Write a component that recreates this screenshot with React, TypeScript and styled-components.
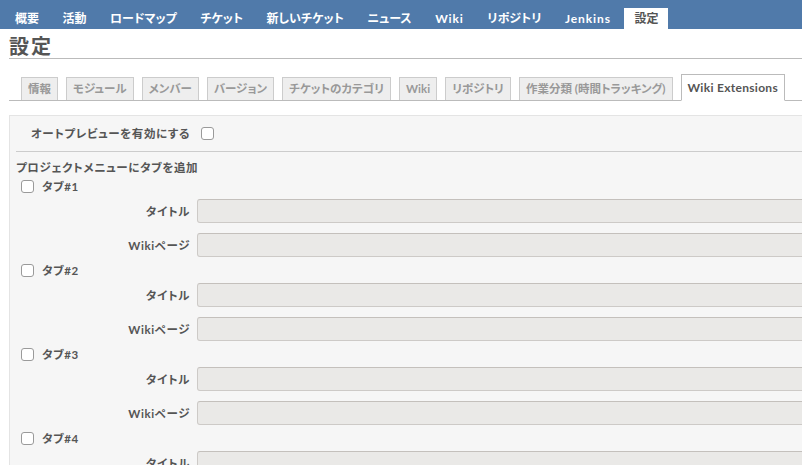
import styled, { createGlobalStyle } from 'styled-components';

const GlobalStyle = createGlobalStyle`
  html, body {
    margin: 0;
    padding: 0;
    overflow: hidden;
    background: #fff;
  }
  body {
    font-family: Lato, "Noto Sans CJK JP", sans-serif;
    font-feature-settings: "palt";
    color: #555;
  }
`;

const Page = styled.div`
  width: 1100px;
`;

const MainMenu = styled.ul`
  display: flex;
  align-items: flex-end;
  height: 29px;
  margin: 0;
  padding: 0 0 0 5px;
  list-style: none;
  background: #507aaa;
`;

const MenuItem = styled.li<{ selected?: boolean; latin?: boolean }>`
  height: 21px;
  line-height: 21px;
  padding: 0 10px;
  margin-right: 3.5px;
  font-size: 12px;
  font-weight: bold;
  letter-spacing: ${(p) => (p.latin ? '0.9px' : '0')};
  color: ${(p) => (p.selected ? '#555' : '#fff')};
  background: ${(p) => (p.selected ? '#fff' : 'transparent')};
`;

const Content = styled.div`
  padding: 0 0 0 9px;
`;

const Title = styled.h2`
  margin: 0;
  height: 29px;
  line-height: 34px;
  font-size: 20px;
  letter-spacing: 2px;
  font-weight: bold;
  color: #555;
  border-bottom: 1px solid #bbb;
`;

const Tabs = styled.ul`
  display: flex;
  align-items: flex-end;
  margin: 16px 0 0 0;
  padding: 0 0 0 12px;
  list-style: none;
  height: 25px;
  border-bottom: 1px solid #bbb;
`;

const Tab = styled.li<{ selected?: boolean }>`
  margin-right: 8px;
  padding: 0 6px;
  height: ${(p) => (p.selected ? '25px' : '22px')};
  line-height: ${(p) => (p.selected ? '25px' : '22px')};
  margin-bottom: ${(p) => (p.selected ? '-1px' : '0')};
  font-size: ${(p) => (p.selected ? '12px' : '11.5px')};
  font-weight: bold;
  letter-spacing: ${(p) => (p.selected ? '0.3px' : '0')};
  color: ${(p) => (p.selected ? '#555' : '#999')};
  background: ${(p) => (p.selected ? '#fff' : '#eee')};
  border: 1px solid ${(p) => (p.selected ? '#bbb' : '#ccc')};
  border-bottom: ${(p) => (p.selected ? '1px solid #fff' : 'none')};
  white-space: nowrap;
`;

const Box = styled.div`
  margin-top: 14px;
  padding: 9px 0 0 6px;
  background: #f6f6f6;
  border: 1px solid #e4e4e4;
  height: 400px;
`;

const Row = styled.div`
  display: flex;
  align-items: center;
`;

const Label = styled.label`
  width: 174px;
  text-align: right;
  font-size: 11.5px;
  font-weight: bold;
  letter-spacing: 0.6px;
  white-space: nowrap;
  color: #555;
`;

const Check = styled.span`
  display: inline-block;
  box-sizing: border-box;
  width: 13px;
  height: 13px;
  border: 1px solid #9a9a9a;
  border-radius: 3px;
  background: #fff;
`;

const PreviewRow = styled(Row)`
  height: 16px;
  ${Check} {
    margin-left: 11px;
  }
`;

const Divider = styled.div`
  margin-top: 10px;
  border-top: 1px solid #ccc;
`;

const Heading = styled.div`
  margin-top: 8px;
  height: 16px;
  line-height: 16px;
  font-size: 11.5px;
  font-weight: bold;
  letter-spacing: 0.6px;
`;

const Group = styled.div`
  display: flex;
  flex-direction: column;
  padding-top: 2px;
  & + & {
    padding-top: 5px;
  }
`;

const GroupHeader = styled(Row)`
  height: 16px;
  padding-left: 5px;
  gap: 8px;
  font-size: 11.5px;
  font-weight: bold;
  letter-spacing: 0.6px;
  margin-bottom: 5px;
`;

const FieldRow = styled(Row)`
  height: 24px;
  & + & {
    margin-top: 10px;
  }
`;

const Input = styled.div`
  margin-left: 7px;
  flex: 1;
  box-sizing: border-box;
  height: 24px;
  background: #eae9e7;
  border: 1px solid #cdcac7;
  border-top-color: #c4c0bc;
  border-radius: 3px;
`;

const menu = ['概要', '活動', 'ロードマップ', 'チケット', '新しいチケット', 'ニュース', 'Wiki', 'リポジトリ', 'Jenkins', '設定'];
const tabs = ['情報', 'モジュール', 'メンバー', 'バージョン', 'チケットのカテゴリ', 'Wiki', 'リポジトリ', '作業分類 (時間トラッキング)', 'Wiki Extensions'];
const isLatin = (s: string) => /^[A-Za-z ]+$/.test(s);

export default function App() {
  return (
    <Page>
      <GlobalStyle />
      <MainMenu>
        {menu.map((m) => (
          <MenuItem key={m} selected={m === '設定'} latin={isLatin(m)}>{m}</MenuItem>
        ))}
      </MainMenu>
      <Content>
        <Title>設定</Title>
        <Tabs>
          {tabs.map((t) => (
            <Tab key={t} selected={t === 'Wiki Extensions'}>{t}</Tab>
          ))}
        </Tabs>
        <Box>
          <PreviewRow>
            <Label>オートプレビューを有効にする</Label>
            <Check />
          </PreviewRow>
          <Divider />
          <Heading>プロジェクトメニューにタブを追加</Heading>
          {[1, 2, 3, 4].map((n) => (
            <Group key={n}>
              <GroupHeader>
                <Check />
                <span>タブ#{n}</span>
              </GroupHeader>
              <FieldRow>
                <Label>タイトル</Label>
                <Input />
              </FieldRow>
              <FieldRow>
                <Label>Wikiページ</Label>
                <Input />
              </FieldRow>
            </Group>
          ))}
        </Box>
      </Content>
    </Page>
  );
}
